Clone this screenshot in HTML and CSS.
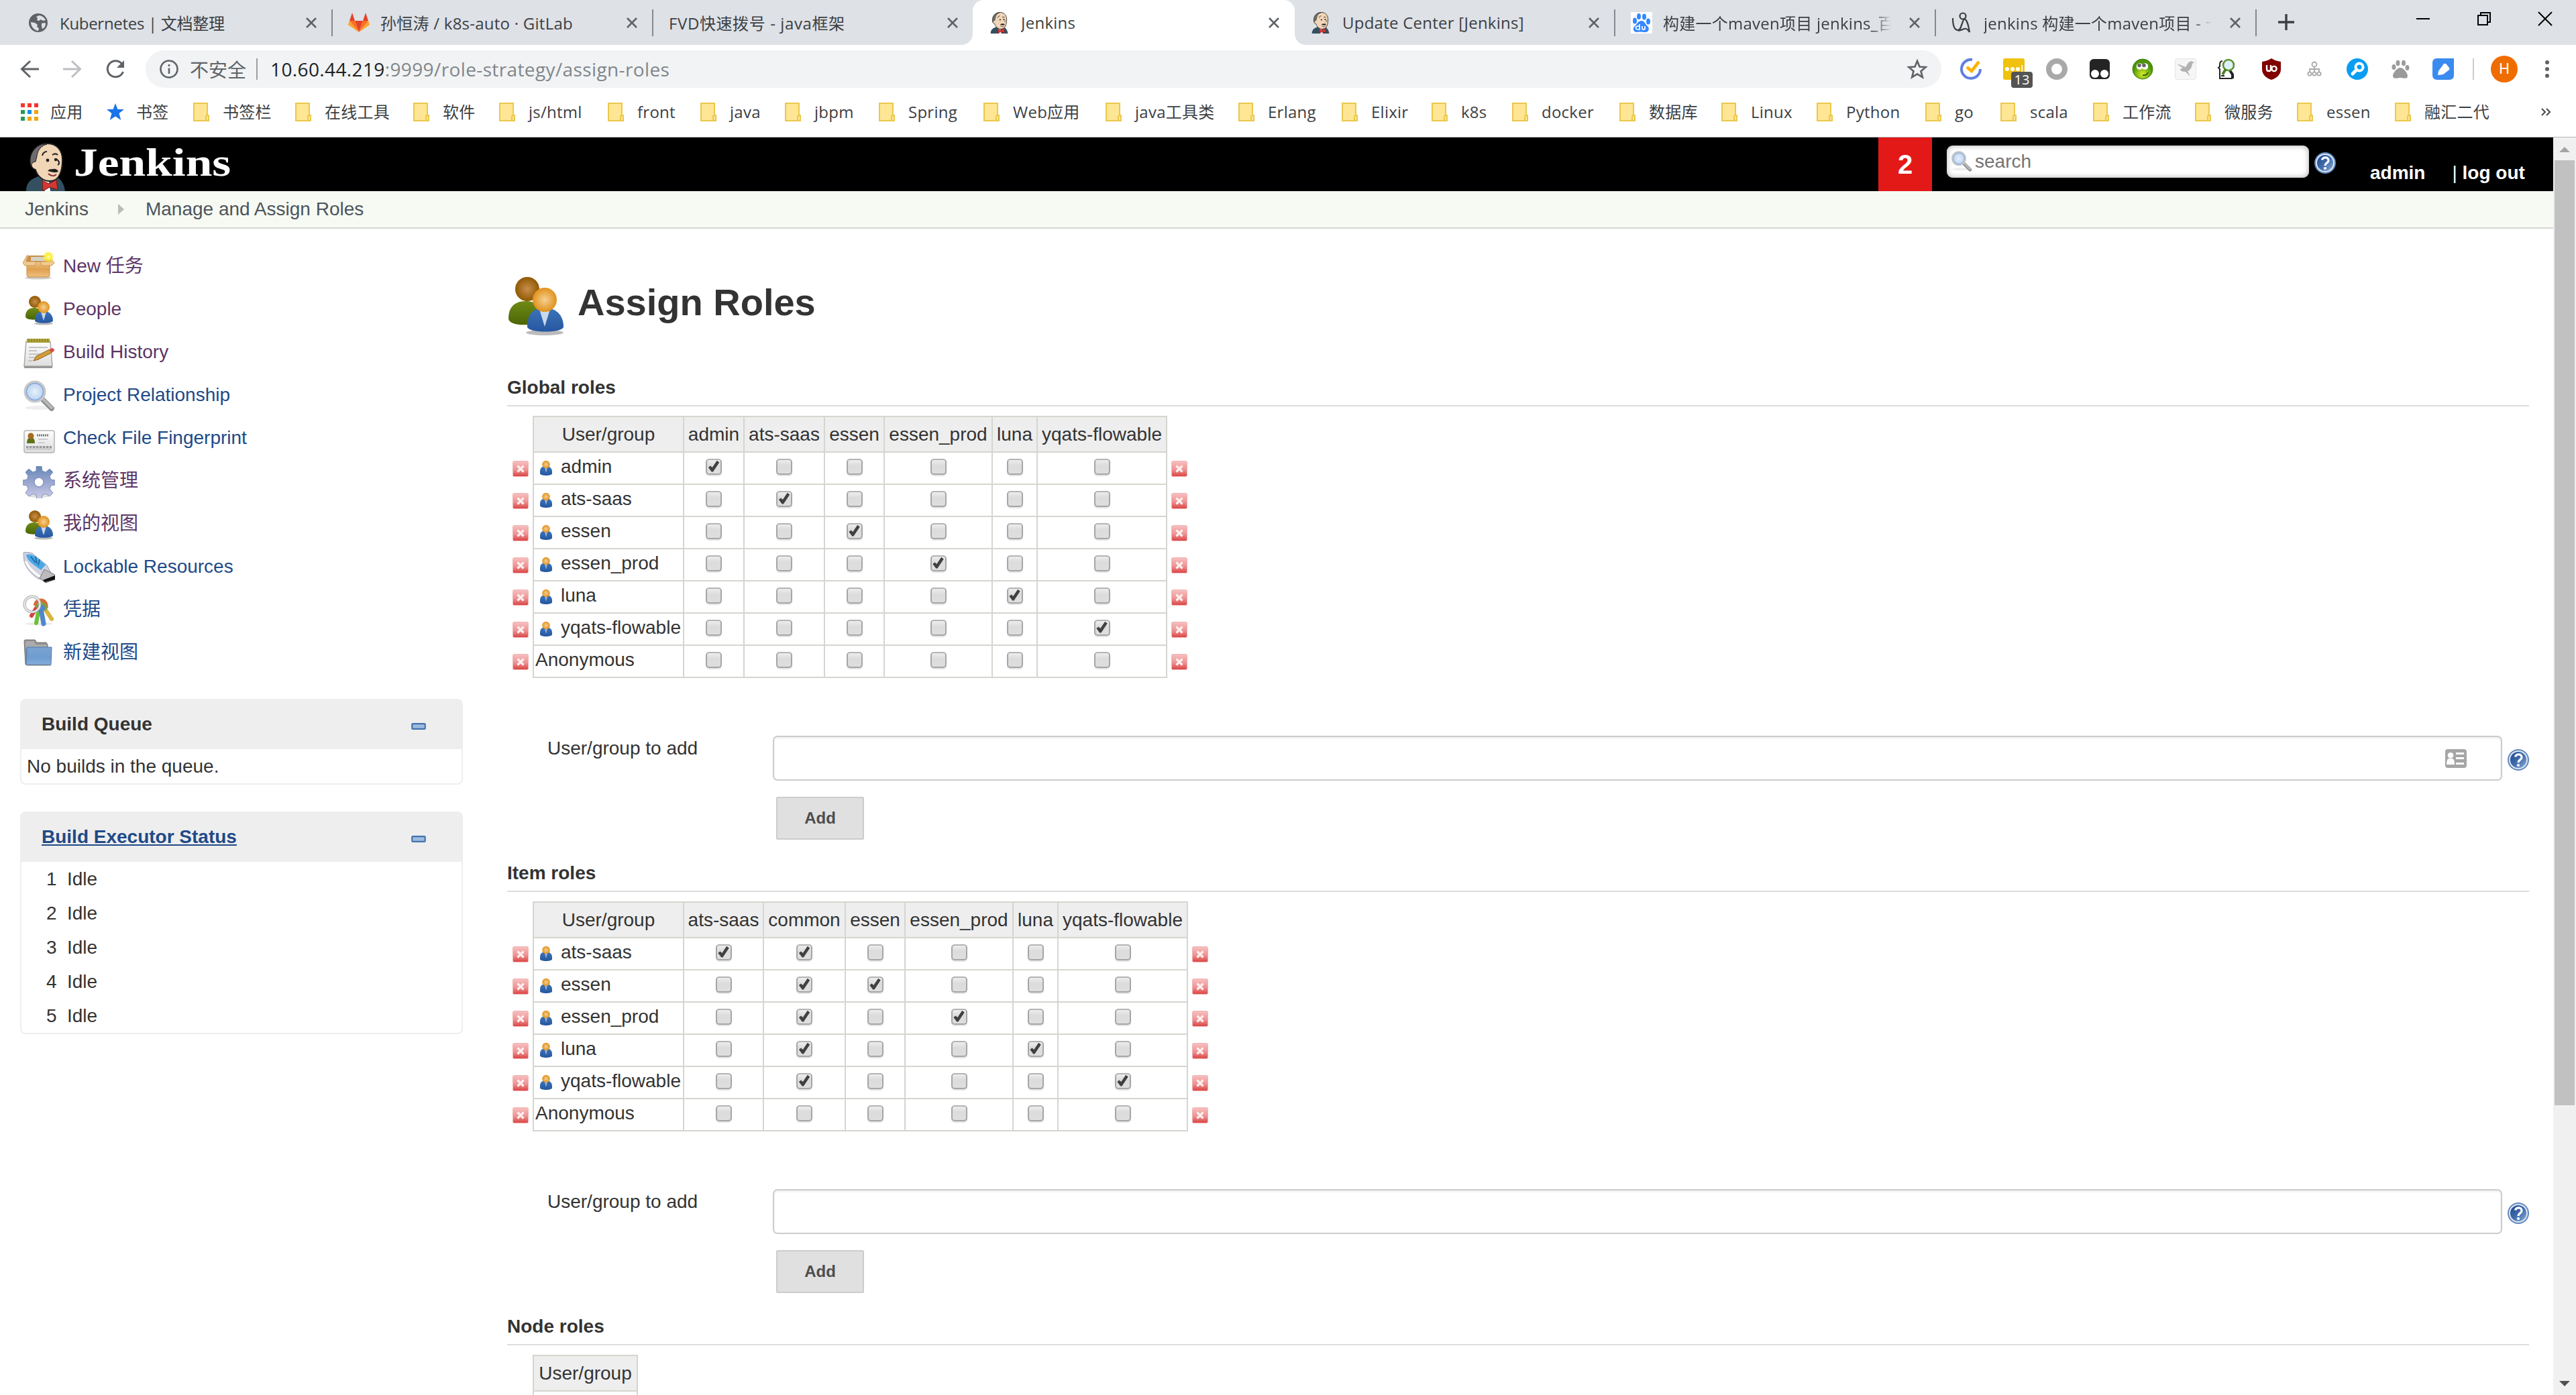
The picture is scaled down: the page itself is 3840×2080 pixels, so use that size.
FILE: index.html
```html
<!DOCTYPE html>
<html lang="zh-CN">
<head>
<meta charset="utf-8">
<title>Jenkins</title>
<link rel="stylesheet" href="styles.css">
</head>
<body>
<svg class="sprite" aria-hidden="true">
  <defs>
    <linearGradient id="g-box" x1="0" y1="0" x2="0" y2="1"><stop offset="0" stop-color="#f0c88a"/><stop offset=".5" stop-color="#e0a050"/><stop offset="1" stop-color="#f0c080"/></linearGradient>
    <radialGradient id="g-sun"><stop offset="0" stop-color="#fffbb0"/><stop offset=".5" stop-color="#fbee35"/><stop offset="1" stop-color="#fbee35" stop-opacity="0"/></radialGradient>
    <radialGradient id="g-brown"><stop offset="0" stop-color="#c98e4b"/><stop offset="1" stop-color="#8f5902"/></radialGradient>
    <radialGradient id="g-orange"><stop offset="0" stop-color="#f6cf94"/><stop offset="1" stop-color="#e0921b"/></radialGradient>
    <linearGradient id="g-green" x1="0" y1="0" x2="0" y2="1"><stop offset="0" stop-color="#6f8a16"/><stop offset="1" stop-color="#4b6606"/></linearGradient>
    <linearGradient id="g-blue" x1="0" y1="0" x2="0" y2="1"><stop offset="0" stop-color="#3d74b8"/><stop offset="1" stop-color="#2557a0"/></linearGradient>
    <linearGradient id="g-paper" x1="0" y1="0" x2="0" y2="1"><stop offset="0" stop-color="#fdfdfd"/><stop offset="1" stop-color="#dedede"/></linearGradient>
    <linearGradient id="g-gear" x1="0" y1="0" x2="0" y2="1"><stop offset="0" stop-color="#6485b5"/><stop offset="1" stop-color="#cfcbea"/></linearGradient>
    <linearGradient id="g-folder" x1="0" y1="0" x2="0" y2="1"><stop offset="0" stop-color="#7ba3d2"/><stop offset=".6" stop-color="#6f9ccf"/><stop offset="1" stop-color="#85aedd"/></linearGradient>
    <linearGradient id="g-help" x1="0" y1="0" x2="1" y2="1"><stop offset="0" stop-color="#1c4587"/><stop offset=".5" stop-color="#3f6bab"/><stop offset="1" stop-color="#8fb0da"/></linearGradient>
    <linearGradient id="g-red" x1="0" y1="0" x2="0" y2="1"><stop offset="0" stop-color="#f8c0c0"/><stop offset=".55" stop-color="#ee9393"/><stop offset="1" stop-color="#db4242"/></linearGradient>
    <radialGradient id="g-lens"><stop offset="0" stop-color="#e6f0fb"/><stop offset="1" stop-color="#b7d0ee"/></radialGradient>
    <radialGradient id="g-smile" cy=".75"><stop offset="0" stop-color="#d6ee2a"/><stop offset="1" stop-color="#4c9308"/></radialGradient>
  </defs>

  <symbol id="i-globe" viewBox="0 0 32 32"><circle cx="16" cy="16" r="14" fill="#5f6368"/><path d="M17 5c4 0 8 3 10 7l-4 1-3-2-3 2-3-1 1-3-2-2zM5 15l6 1 4 3-1 3 3 2-1 4c-6-1-11-6-11-13zM21 17l4-1 2 1c0 4-2 7-5 8l-1-4z" fill="#dee1e6"/></symbol>
  <symbol id="i-gitlab" viewBox="0 0 32 32"><path d="M16 30L10 13h12z" fill="#e24329"/><path d="M16 30L10 13H2zM16 30l6-17h8z" fill="#fc6d26"/><path d="M2 13l-2 6 16 11zM30 13l2 6-16 11z" fill="#fca326"/><path d="M2 13L6 1l4 12zM30 13L26 1l-4 12z" fill="#e24329"/></symbol>
  <symbol id="i-jenkins" viewBox="0 0 64 72"><path d="M2 72c0-14 8-18 18-22h24c8 2 14 8 16 22z" fill="#335061"/><path d="M27 54l9 4 2 14h-8z" fill="#fff"/><path d="M9 30C7 12 19 1 34 1c14 0 22 11 22 24 0 8-1 16-4 22-3 7-9 10-15 10-10 0-18-7-21-17-5-1-7-6-7-10z" fill="#f0d6b7" stroke="#231f20" stroke-width="1.8"/><path d="M9 34C4 16 18 0 33 2 25 4 19 10 18 20l-2 8-4 1z" fill="#6d6b6d" stroke="#231f20"/><path d="M26 19c1-4 4-6 7-6M41 18c3-2 6-2 8 0M47 24c4 3 6 7 2 9" fill="none" stroke="#231f20" stroke-width="2"/><circle cx="34" cy="26" r="2.4" fill="#231f20"/><circle cx="46" cy="25" r="2.2" fill="#231f20"/><path d="M34 42c3-4 6-2 8-3 4-1 7 1 8 4-4 2-8 1-16-1z" fill="#231f20"/><path d="M35 46c4 4 9 4 12 1" fill="none" stroke="#8b2b2b" stroke-width="2"/><path d="M26 56l10 5 11-6 2 15-12-4-10 6z" fill="#d33833" stroke="#7a1612"/></symbol>
  <symbol id="i-baidu" viewBox="0 0 32 32"><path d="M0 0h32v32H0z" fill="#fff"/><g fill="#3388ff"><ellipse cx="6" cy="13" rx="3" ry="4.5"/><ellipse cx="12" cy="6.500" rx="3" ry="4.500"/><ellipse cx="20" cy="7" rx="3" ry="4.500"/><ellipse cx="26" cy="14" rx="3" ry="4.500"/><path d="M16 13c5 0 5 5 9 8 4 4 1 9-3 9-3 0-9-1-13 0-5 0-7-6-3-9 4-4 5-8 10-8z"/></g><path d="M13 18v8h-3a2 2 0 0 1 0-5h3M17 21v3a2 2 0 0 0 4 0v-3 5" fill="none" stroke="#fff" stroke-width="1.700"/></symbol>
  <symbol id="i-bird" viewBox="0 0 32 32"><g fill="none" stroke="#3c3c3c" stroke-width="2.200"><circle cx="17" cy="6" r="4.500"/><path d="M2 9c0 12 3 18 8 18 5-1 4-9 9-17 4 1 6 8 8 20-3-5-5-6-8-5-5 2-8 4-11 1"/></g></symbol>
  <symbol id="i-close" viewBox="0 0 16 16"><path d="M1 1l14 14M15 1L1 15" stroke="#5f6368" stroke-width="2.600"/></symbol>

  <symbol id="i-folder-y" viewBox="0 0 24 28"><path d="M1 1h20v18h2v8H1z" fill="#ffe694" stroke="#ebc84b" stroke-width="2"/><path d="M19 27v-6q0-2 2-2t2 2v6z" fill="#ffe694" stroke="#ebc84b" stroke-width="2"/></symbol>

  <symbol id="i-people" viewBox="0 0 48 48"><ellipse cx="31" cy="43.500" rx="14" ry="2" fill="#bbb"/><path d="M4 33c0-9 5-13 13-13s12 5 12 14c-5 5-25 5-25-1z" fill="url(#g-green)"/><circle cx="18" cy="11" r="9" fill="url(#g-brown)"/><path d="M18 39c0-9 4-14 13-14s14 6 14 14c0 5-27 5-27 0z" fill="url(#g-blue)"/><path d="M27 26h8l-4 13z" fill="#c9d8ec"/><circle cx="31" cy="19" r="9" fill="url(#g-orange)"/></symbol>
  <symbol id="i-user" viewBox="0 0 20 24"><path d="M1 17c0-6 4-8 9-8s9 3 9 8v3c0 4-18 4-18 0z" fill="url(#g-blue)"/><path d="M8 11h4l-2 8z" fill="#9db9de"/><circle cx="10" cy="6.500" r="5.800" fill="url(#g-orange)"/></symbol>
  <symbol id="i-newbox" viewBox="0 0 48 48"><ellipse cx="23" cy="39.500" rx="20" ry="2" fill="#ccc"/><path d="M8 6h30l3 9H5z" fill="#c98f45"/><path d="M12 8h22v6H12z" fill="#d7d3c4"/><path d="M6 15h34v20q0 3-3 3H9q-3 0-3-3z" fill="url(#g-box)" stroke="#c58b3e"/><path d="M7 5L0 17l3 4h15l2-6h6l2 6h15l4-4-8-11 3 9H5z" fill="#f1ca91" stroke="#c99858"/><circle cx="38" cy="8" r="9" fill="url(#g-sun)"/></symbol>
  <symbol id="i-notepad" viewBox="0 0 48 48"><path d="M5 6h36l3 37H2z" fill="url(#g-paper)" stroke="#a9a9a0" stroke-width="1.500"/><path d="M2 43h42v3H2z" fill="#999"/><path d="M6 2h34v6H6z" fill="#b0a43a"/><path d="M9 2v5M13 2v5M17 2v5M21 2v5M25 2v5M29 2v5M33 2v5M37 2v5" stroke="#7d7420"/><path d="M9 15h28M9 20h12M9 25h16M9 30h9M8 35h7" stroke="#c5c5c5" stroke-width="2"/><path d="M16 35l4-7 20-10 3 5-20 10z" fill="#d19b3b" stroke="#8f6316"/><path d="M40 18l3-2q4 0 4 4l-4 3z" fill="#e04848"/></symbol>
  <symbol id="i-search" viewBox="0 0 48 48"><ellipse cx="24" cy="41" rx="21" ry="3" fill="#eee"/><path d="M29 28l14 14" stroke="#8c8c8c" stroke-width="7.500" stroke-linecap="round"/><path d="M31 29l12 12" stroke="#b9b9b9" stroke-width="4" stroke-linecap="round"/><circle cx="18" cy="17" r="14.500" fill="url(#g-lens)" stroke="#c9c9c9" stroke-width="4"/><circle cx="18" cy="17" r="12.500" fill="none" stroke="#7fa7dc" stroke-width="1.500"/></symbol>
  <symbol id="i-card" viewBox="0 0 48 48"><rect x="2" y="11" width="45" height="33" rx="3" fill="url(#g-paper)" stroke="#b5b5b5" stroke-width="1.500"/><path d="M6 30q0-9 6-9t6 9z" fill="#5d7416"/><circle cx="12" cy="19" r="4.500" fill="#a76a20"/><path d="M21 18h17" stroke="#777" stroke-width="3" stroke-dasharray="2 1"/><path d="M23 24h14M23 29h10" stroke="#ccc" stroke-width="2"/><path d="M5 34h38v6H5z" fill="#ccc"/><path d="M5 35.500h38" stroke="#999" stroke-width="3" stroke-dasharray="3 2"/></symbol>
  <symbol id="i-gear" viewBox="0 0 48 48"><ellipse cx="24" cy="44" rx="17" ry="3" fill="#ddd"/><path d="M20 0h8l1 7 5 2 6-5 5 5-5 6 2 5 6 1v7l-6 1-2 5 5 6-5 5-6-4-5 2-1 6h-7l-1-6-5-2-6 4-5-5 4-6-2-5-6-1v-7l6-1 2-5-4-6 5-5 6 5 5-2z" fill="url(#g-gear)" stroke="#8193b8"/><circle cx="24" cy="24" r="7" fill="#fff" stroke="#8a94c0" stroke-width="1.500"/></symbol>
  <symbol id="i-usb" viewBox="0 0 48 48"><path d="M1 1q6-2 13 1l22 18 6 11-6 10-13-1Q7 30 2 14z" fill="#d2d3e1" stroke="#9b9cae"/><path d="M4 14q8 16 26 25" stroke="#fff" stroke-width="3" fill="none"/><path d="M5 4q8-2 14 3l15 12-7 8-11-8Q6 12 5 4z" fill="#48a9e6"/><path d="M12 7l7 9m0-9l2 10m4-6l-2 9" stroke="#1b5d9d" stroke-width="1.500"/><path d="M32 26l16 8v7l-14 5-9-7z" fill="#bbb" stroke="#777"/><path d="M30 42l18-7v6l-15 4z" fill="#111"/></symbol>
  <symbol id="i-keys" viewBox="0 0 48 48"><ellipse cx="24" cy="43" rx="20" ry="2.500" fill="#ececec"/><path d="M21 18l-8 13" stroke="#d8403c" stroke-width="6" stroke-linecap="round"/><path d="M24 20l-4 22" stroke="#6cc235" stroke-width="6" stroke-linecap="round"/><path d="M31 18l12 18" stroke="#d6b540" stroke-width="6" stroke-linecap="round"/><path d="M18 16q2-9 10-8 8 2 7 12" fill="none" stroke="#da6a34" stroke-width="5"/><path d="M20 19q4-8 10-6 6 3 3 10" fill="none" stroke="#78a63b" stroke-width="4"/><path d="M27 21l4 22" stroke="#5187ca" stroke-width="7" stroke-linecap="round"/><circle cx="27" cy="20" r="6" fill="#5187ca"/><circle cx="14" cy="14" r="11.500" fill="none" stroke="#aaa" stroke-width="4"/><circle cx="14" cy="14" r="11.500" fill="none" stroke="#eee" stroke-width="2"/></symbol>
  <symbol id="i-folder-b" viewBox="0 0 48 48"><path d="M2 5q0-2 2-2h14l3 4h14l2 3v30H4z" fill="#8f8f8f" stroke="#777"/><path d="M4 5h13l2 5h17v6H4z" fill="#ababab"/><path d="M6 14h37l-1 26H5z" fill="url(#g-folder)" stroke="#4d7ab0"/><path d="M6 41h36" stroke="#777"/></symbol>

  <symbol id="i-help" viewBox="0 0 32 32"><circle cx="16" cy="16" r="16" fill="#6288bd"/><circle cx="16" cy="16" r="13" fill="url(#g-help)" stroke="#dbe6f4" stroke-width="2"/><path d="M11.500 11.500c1-5 10-5 9.500 1-.5 4-5 3.500-5 7.500" fill="none" stroke="#fff" stroke-width="3.300"/><circle cx="16" cy="24" r="2.100" fill="#fff"/></symbol>
  <symbol id="i-del" viewBox="0 0 24 24"><rect x=".5" y=".5" width="23" height="23" rx="2" fill="url(#g-red)" stroke="#efb4b4"/><path d="M7.500 7.500l9 9m0-9l-9 9" stroke="#fdeeee" stroke-width="3.200"/></symbol>
  <symbol id="i-minus" viewBox="0 0 26 12"><rect x="1.300" y="1.300" width="23.400" height="9.400" rx="1.500" fill="#9dbbe0" stroke="#4372ae" stroke-width="2.600"/></symbol>
  <symbol id="i-contact" viewBox="0 0 32 28"><rect width="32" height="28" rx="4" fill="#a6a6a6"/><g fill="#fff"><circle cx="8" cy="9.300" r="4.300"/><path d="M2 23q0-9 4-9h4q4 0 4 9zM16 5h12v3H16zM16 12h12v3H16zM16 20h12v3H16z"/></g></symbol>
</svg>

<header class="chrome">
  <div class="tabs">
    <div class="tab"><svg class="fav"><use href="#i-globe"/></svg><span class="tab-t snug">Kubernetes | 文档整理</span><svg class="x"><use href="#i-close"/></svg></div>
    <div class="tab"><svg class="fav"><use href="#i-gitlab"/></svg><span class="tab-t">孙恒涛 / k8s-auto · GitLab</span><svg class="x"><use href="#i-close"/></svg></div>
    <div class="tab last-before"><span class="tab-t wide">FVD快速拨号 - java框架</span><svg class="x"><use href="#i-close"/></svg></div>
    <div class="tab active"><svg class="fav"><use href="#i-jenkins"/></svg><span class="tab-t">Jenkins</span><svg class="x"><use href="#i-close"/></svg></div>
    <div class="tab"><svg class="fav"><use href="#i-jenkins"/></svg><span class="tab-t">Update Center [Jenkins]</span><svg class="x"><use href="#i-close"/></svg></div>
    <div class="tab"><svg class="fav"><use href="#i-baidu"/></svg><span class="tab-t fade">构建一个maven项目 jenkins_百度</span><svg class="x"><use href="#i-close"/></svg></div>
    <div class="tab"><svg class="fav"><use href="#i-bird"/></svg><span class="tab-t fade">jenkins 构建一个maven项目 - 卡饭</span><svg class="x"><use href="#i-close"/></svg></div>
    <svg class="plus" viewBox="0 0 24 24"><path d="M12 0v24M0 12h24" stroke="#3c4043" stroke-width="3.400"/></svg>
    <div class="win">
      <svg viewBox="0 0 20 20"><path d="M0 10h20" stroke="#000" stroke-width="2"/></svg>
      <svg viewBox="0 0 20 20"><path d="M1 5h14v14H1zM5 5V1h14v14h-4" fill="none" stroke="#000" stroke-width="2"/></svg>
      <svg viewBox="0 0 20 20"><path d="M0 0l20 20M20 0L0 20" stroke="#000" stroke-width="2"/></svg>
    </div>
  </div>

  <div class="toolbar">
    <div class="nav">
      <svg viewBox="0 0 28 28"><path d="M28 14H3M15 2L2.500 14 15 26" fill="none" stroke="#5f6368" stroke-width="3"/></svg>
      <svg viewBox="0 0 28 28"><path d="M0 14h25M13 2l12.500 12L13 26" fill="none" stroke="#bcbec1" stroke-width="3"/></svg>
      <svg viewBox="0 0 28 28"><path d="M23.500 6A12 12 0 1 0 25.500 18" fill="none" stroke="#5f6368" stroke-width="3"/><path d="M27 1v11H16z" fill="#5f6368"/></svg>
    </div>
    <div class="omni">
      <svg class="info" viewBox="0 0 28 28"><circle cx="14" cy="14" r="12.500" fill="none" stroke="#5f6368" stroke-width="2.600"/><path d="M14 12.500V21M14 7v3" stroke="#5f6368" stroke-width="2.600"/></svg>
      <span class="insecure">不安全</span>
      <span class="url"><b>10.60.44.219</b>:9999/role-strategy/assign-roles</span>
      <svg class="star" viewBox="0 0 32 32"><path d="M16 4l3.500 8.500 9 .7-7 6 2.300 9L16 23.400l-7.800 4.800 2.300-9-7-6 9-.7z" fill="none" stroke="#5f6368" stroke-width="2.700"/></svg>
    </div>
    <div class="exts">
      <svg viewBox="0 0 32 32"><path d="M18 2A14 14 0 1 0 30 16" fill="none" stroke="#617fe0" stroke-width="4"/><path d="M10 13l7 6L28 5" fill="none" stroke="#ffb000" stroke-width="4.500"/></svg>
      <div class="badged"><svg viewBox="0 0 32 32"><rect width="32" height="32" rx="3" fill="#f0c20f"/><g fill="#fff"><circle cx="6" cy="16" r="3"/><circle cx="14" cy="16" r="3"/><circle cx="22" cy="16" r="3"/><path d="M27.500 10h1.500v10h-1.500z"/></g></svg><span class="badge">13</span></div>
      <svg viewBox="0 0 32 32"><circle cx="16" cy="16" r="12" fill="#fff" stroke="#a9a9a9" stroke-width="8"/></svg>
      <svg viewBox="0 0 32 32"><rect x="1" y="1" width="30" height="30" rx="6" fill="#242424"/><circle cx="9" cy="23" r="6" fill="#fff"/><circle cx="23" cy="23" r="6" fill="#fff"/></svg>
      <svg viewBox="0 0 32 32"><circle cx="16" cy="16" r="15" fill="url(#g-smile)" stroke="#3c7a0c"/><circle cx="11.500" cy="12" r="4.800" fill="#fff"/><circle cx="19.500" cy="12" r="4.800" fill="#fff"/><circle cx="11" cy="10.500" r="2.800" fill="#666"/><circle cx="18" cy="10.500" r="2.800" fill="#666"/><path d="M16 25q6 1 8-4" fill="none" stroke="#1f4a05" stroke-width="1.600"/></svg>
      <svg viewBox="0 0 32 32"><rect x=".5" y=".5" width="31" height="31" rx="3" fill="#f6f6f6" stroke="#e6e6e6"/><path d="M3 8l13 5q4-8 8-9l5 2-3 2q-1 9-7 11l4 8-7-7q-8 0-8-4l4-2q-5-2-9-6z" fill="#b2b2b2"/></svg>
      <svg viewBox="0 0 32 32"><path d="M7 4q-4 0-4 5v3L1 14l2 2v14h19M10 26H5" fill="none" stroke="#222" stroke-width="2"/><path d="M22 30v-6l-4-6" fill="none" stroke="#222" stroke-width="4"/><circle cx="16" cy="10" r="8" fill="#dff0fa" stroke="#5d9130" stroke-width="2.600"/><path d="M12 16l-5 8" stroke="#4b7d22" stroke-width="4"/></svg>
      <svg viewBox="0 0 32 32"><path d="M16 0q6 4 14 5v11q0 11-14 16Q2 27 2 16V5q8-1 14-5z" fill="#800000"/><path d="M9 10v6q0 3 3 3t3-3v-6" fill="none" stroke="#fff" stroke-width="2.400"/><circle cx="20" cy="15.500" r="3.600" fill="none" stroke="#fff" stroke-width="2.400"/></svg>
      <svg viewBox="0 0 32 32"><g fill="none" stroke="#a9a9a9" stroke-width="1.800"><circle cx="16" cy="9" r="3.500"/><circle cx="9" cy="23" r="2.600"/><circle cx="16" cy="23" r="2.600"/><circle cx="23" cy="23" r="2.600"/><path d="M16 12v8M9 20v-4h14v4"/></g></svg>
      <svg viewBox="0 0 32 32"><circle cx="16" cy="16" r="16" fill="#0a9df2"/><circle cx="19" cy="13" r="5.500" fill="none" stroke="#fff" stroke-width="4"/><path d="M15 17l-6 6" stroke="#fff" stroke-width="5" stroke-linecap="round"/></svg>
      <svg viewBox="0 0 32 32"><g fill="#9b9b9b"><ellipse cx="6.500" cy="13" rx="3" ry="4"/><ellipse cx="12.500" cy="7" rx="3" ry="4.300"/><ellipse cx="21" cy="7" rx="3" ry="4.300"/><ellipse cx="26.500" cy="14" rx="3" ry="4"/><path d="M16 14c5 0 11 8 11 12 0 6-6 3-11 3S5 32 5 26c0-4 6-12 11-12z"/></g></svg>
      <svg viewBox="0 0 32 32"><path d="M7 0h25v25q0 7-7 7H7q-7 0-7-7V7q0-7 7-7z" fill="#3a8bf0"/><path d="M9 19L17 8q2-1 4 1l4 5q1 2 0 3l-9 7-8 1z" fill="#fff"/></svg>
    </div>
    <i class="vsep"></i>
    <span class="avatar">H</span>
    <svg class="kebab" viewBox="0 0 6 26"><g fill="#5f6368"><circle cx="3" cy="3" r="3"/><circle cx="3" cy="13" r="3"/><circle cx="3" cy="23" r="3"/></g></svg>
  </div>

  <nav class="marks">
    <a><svg class="m26" viewBox="0 0 26 26"><path d="M0 0h6v6H0zM10 0h6v6h-6zM20 0h6v6h-6z" fill="#f5362e"/><path d="M0 10h6v6H0zM0 20h6v6H0z" fill="#279b54"/><path d="M10 10h6v6h-6z" fill="#1a8cf0"/><path d="M20 10h6v6h-6zM10 20h6v6h-6zM20 20h6v6h-6z" fill="#f2a60c"/></svg>应用</a>
    <a><svg class="m26" viewBox="0 0 26 26"><path d="M13 0l3.400 9H26l-7.500 6 2.800 10L13 19.500 4.700 25l2.800-10L0 9h9.600z" fill="#1a73e8"/></svg>书签</a>
    <a><svg><use href="#i-folder-y"/></svg>书签栏</a>
    <a><svg><use href="#i-folder-y"/></svg>在线工具</a>
    <a><svg><use href="#i-folder-y"/></svg>软件</a>
    <a><svg><use href="#i-folder-y"/></svg>js/html</a>
    <a><svg><use href="#i-folder-y"/></svg>front</a>
    <a><svg><use href="#i-folder-y"/></svg>java</a>
    <a><svg><use href="#i-folder-y"/></svg>jbpm</a>
    <a><svg><use href="#i-folder-y"/></svg>Spring</a>
    <a><svg><use href="#i-folder-y"/></svg>Web应用</a>
    <a><svg><use href="#i-folder-y"/></svg>java工具类</a>
    <a><svg><use href="#i-folder-y"/></svg>Erlang</a>
    <a><svg><use href="#i-folder-y"/></svg>Elixir</a>
    <a><svg><use href="#i-folder-y"/></svg>k8s</a>
    <a><svg><use href="#i-folder-y"/></svg>docker</a>
    <a><svg><use href="#i-folder-y"/></svg>数据库</a>
    <a><svg><use href="#i-folder-y"/></svg>Linux</a>
    <a><svg><use href="#i-folder-y"/></svg>Python</a>
    <a><svg><use href="#i-folder-y"/></svg>go</a>
    <a><svg><use href="#i-folder-y"/></svg>scala</a>
    <a><svg><use href="#i-folder-y"/></svg>工作流</a>
    <a><svg><use href="#i-folder-y"/></svg>微服务</a>
    <a><svg><use href="#i-folder-y"/></svg>essen</a>
    <a><svg><use href="#i-folder-y"/></svg>融汇二代</a>
    <svg class="more" viewBox="0 0 14 12"><path d="M1 1l5 5-5 5M8 1l5 5-5 5" fill="none" stroke="#4d5156" stroke-width="2.200"/></svg>
  </nav>
</header>

<div class="view">
  <div class="page">
    <div class="top">
      <svg class="mascot"><use href="#i-jenkins"/></svg>
      <span class="brand">Jenkins</span>
      <span class="alerts">2</span>
      <div class="searchbox"><svg><use href="#i-search"/></svg>search</div>
      <svg class="help"><use href="#i-help"/></svg>
      <b class="who">admin</b>
      <span class="out">| <b>log out</b></span>
    </div>
    <div class="crumbs"><span>Jenkins</span><i></i><span>Manage and Assign Roles</span></div>

    <div class="cols">
      <aside>
        <ul class="tasks">
          <li class="seen"><svg><use href="#i-newbox"/></svg>New 任务</li>
          <li class="seen"><svg><use href="#i-people"/></svg>People</li>
          <li class="seen"><svg><use href="#i-notepad"/></svg>Build History</li>
          <li><svg><use href="#i-search"/></svg>Project Relationship</li>
          <li><svg><use href="#i-card"/></svg>Check File Fingerprint</li>
          <li class="seen"><svg><use href="#i-gear"/></svg>系统管理</li>
          <li class="seen"><svg><use href="#i-people"/></svg>我的视图</li>
          <li><svg><use href="#i-usb"/></svg>Lockable Resources</li>
          <li><svg><use href="#i-keys"/></svg>凭据</li>
          <li><svg><use href="#i-folder-b"/></svg>新建视图</li>
        </ul>
        <section class="pane">
          <h3><span>Build Queue</span><svg><use href="#i-minus"/></svg></h3>
          <p>No builds in the queue.</p>
        </section>
        <section class="pane">
          <h3><a>Build Executor Status</a><svg><use href="#i-minus"/></svg></h3>
          <ol><li><i>1</i>Idle</li><li><i>2</i>Idle</li><li><i>3</i>Idle</li><li><i>4</i>Idle</li><li><i>5</i>Idle</li></ol>
        </section>
      </aside>

      <main>
        <h1><svg><use href="#i-people"/></svg>Assign Roles</h1>

        <h2>Global roles</h2>
        <table class="roles global">
          <colgroup><col class="c-edge"><col class="c-user"><col class="c1"><col class="c2"><col class="c3"><col class="c4"><col class="c5"><col class="c6"><col class="c-edge2"></colgroup>
          <tr><td class="e"></td><th>User/group</th><th>admin</th><th>ats-saas</th><th>essen</th><th>essen_prod</th><th>luna</th><th>yqats-flowable</th><td class="e"></td></tr>
          <tr><td class="e"><svg><use href="#i-del"/></svg></td><td class="u"><svg><use href="#i-user"/></svg>admin</td><td><input type="checkbox" checked></td><td><input type="checkbox"></td><td><input type="checkbox"></td><td><input type="checkbox"></td><td><input type="checkbox"></td><td><input type="checkbox"></td><td class="e r"><svg><use href="#i-del"/></svg></td></tr>
          <tr><td class="e"><svg><use href="#i-del"/></svg></td><td class="u"><svg><use href="#i-user"/></svg>ats-saas</td><td><input type="checkbox"></td><td><input type="checkbox" checked></td><td><input type="checkbox"></td><td><input type="checkbox"></td><td><input type="checkbox"></td><td><input type="checkbox"></td><td class="e r"><svg><use href="#i-del"/></svg></td></tr>
          <tr><td class="e"><svg><use href="#i-del"/></svg></td><td class="u"><svg><use href="#i-user"/></svg>essen</td><td><input type="checkbox"></td><td><input type="checkbox"></td><td><input type="checkbox" checked></td><td><input type="checkbox"></td><td><input type="checkbox"></td><td><input type="checkbox"></td><td class="e r"><svg><use href="#i-del"/></svg></td></tr>
          <tr><td class="e"><svg><use href="#i-del"/></svg></td><td class="u"><svg><use href="#i-user"/></svg>essen_prod</td><td><input type="checkbox"></td><td><input type="checkbox"></td><td><input type="checkbox"></td><td><input type="checkbox" checked></td><td><input type="checkbox"></td><td><input type="checkbox"></td><td class="e r"><svg><use href="#i-del"/></svg></td></tr>
          <tr><td class="e"><svg><use href="#i-del"/></svg></td><td class="u"><svg><use href="#i-user"/></svg>luna</td><td><input type="checkbox"></td><td><input type="checkbox"></td><td><input type="checkbox"></td><td><input type="checkbox"></td><td><input type="checkbox" checked></td><td><input type="checkbox"></td><td class="e r"><svg><use href="#i-del"/></svg></td></tr>
          <tr><td class="e"><svg><use href="#i-del"/></svg></td><td class="u"><svg><use href="#i-user"/></svg>yqats-flowable</td><td><input type="checkbox"></td><td><input type="checkbox"></td><td><input type="checkbox"></td><td><input type="checkbox"></td><td><input type="checkbox"></td><td><input type="checkbox" checked></td><td class="e r"><svg><use href="#i-del"/></svg></td></tr>
          <tr><td class="e"><svg><use href="#i-del"/></svg></td><td class="u">Anonymous</td><td><input type="checkbox"></td><td><input type="checkbox"></td><td><input type="checkbox"></td><td><input type="checkbox"></td><td><input type="checkbox"></td><td><input type="checkbox"></td><td class="e r"><svg><use href="#i-del"/></svg></td></tr>
        </table>
        <div class="add">
          <label>User/group to add</label>
          <div class="field"><svg><use href="#i-contact"/></svg></div>
          <svg class="help"><use href="#i-help"/></svg>
          <button>Add</button>
        </div>

        <h2>Item roles</h2>
        <table class="roles item">
          <colgroup><col class="c-edge"><col class="c-user"><col class="c1"><col class="c2"><col class="c3"><col class="c4"><col class="c5"><col class="c6"><col class="c-edge2"></colgroup>
          <tr><td class="e"></td><th>User/group</th><th>ats-saas</th><th>common</th><th>essen</th><th>essen_prod</th><th>luna</th><th>yqats-flowable</th><td class="e"></td></tr>
          <tr><td class="e"><svg><use href="#i-del"/></svg></td><td class="u"><svg><use href="#i-user"/></svg>ats-saas</td><td><input type="checkbox" checked></td><td><input type="checkbox" checked></td><td><input type="checkbox"></td><td><input type="checkbox"></td><td><input type="checkbox"></td><td><input type="checkbox"></td><td class="e r"><svg><use href="#i-del"/></svg></td></tr>
          <tr><td class="e"><svg><use href="#i-del"/></svg></td><td class="u"><svg><use href="#i-user"/></svg>essen</td><td><input type="checkbox"></td><td><input type="checkbox" checked></td><td><input type="checkbox" checked></td><td><input type="checkbox"></td><td><input type="checkbox"></td><td><input type="checkbox"></td><td class="e r"><svg><use href="#i-del"/></svg></td></tr>
          <tr><td class="e"><svg><use href="#i-del"/></svg></td><td class="u"><svg><use href="#i-user"/></svg>essen_prod</td><td><input type="checkbox"></td><td><input type="checkbox" checked></td><td><input type="checkbox"></td><td><input type="checkbox" checked></td><td><input type="checkbox"></td><td><input type="checkbox"></td><td class="e r"><svg><use href="#i-del"/></svg></td></tr>
          <tr><td class="e"><svg><use href="#i-del"/></svg></td><td class="u"><svg><use href="#i-user"/></svg>luna</td><td><input type="checkbox"></td><td><input type="checkbox" checked></td><td><input type="checkbox"></td><td><input type="checkbox"></td><td><input type="checkbox" checked></td><td><input type="checkbox"></td><td class="e r"><svg><use href="#i-del"/></svg></td></tr>
          <tr><td class="e"><svg><use href="#i-del"/></svg></td><td class="u"><svg><use href="#i-user"/></svg>yqats-flowable</td><td><input type="checkbox"></td><td><input type="checkbox" checked></td><td><input type="checkbox"></td><td><input type="checkbox"></td><td><input type="checkbox"></td><td><input type="checkbox" checked></td><td class="e r"><svg><use href="#i-del"/></svg></td></tr>
          <tr><td class="e"><svg><use href="#i-del"/></svg></td><td class="u">Anonymous</td><td><input type="checkbox"></td><td><input type="checkbox"></td><td><input type="checkbox"></td><td><input type="checkbox"></td><td><input type="checkbox"></td><td><input type="checkbox"></td><td class="e r"><svg><use href="#i-del"/></svg></td></tr>
        </table>
        <div class="add">
          <label>User/group to add</label>
          <div class="field"></div>
          <svg class="help"><use href="#i-help"/></svg>
          <button>Add</button>
        </div>

        <h2>Node roles</h2>
        <table class="roles node">
          <colgroup><col class="c-edge"><col class="c-user"></colgroup>
          <tr><td class="e"></td><th>User/group</th></tr>
          <tr><td class="e"></td><td></td></tr>
        </table>
      </main>
    </div>
  </div>
  <div class="scroll"><i class="up"></i><i class="thumb"></i><i class="down"></i></div>
</div>
</body>
</html>
```
FILE: styles.css
```css
* { box-sizing: border-box; margin: 0; padding: 0; }
html, body { width: 3840px; height: 2080px; overflow: hidden; background: #fff; }
body { display: flex; flex-direction: column; font-family: "Liberation Sans", "Noto Sans CJK SC", sans-serif; font-size: 28px; color: #333; }
i { font-style: normal; }
svg { display: block; flex: none; overflow: visible; }
.sprite { position: absolute; width: 0; height: 0; }

/* browser frame */
.chrome { flex: none; height: 205px; border-bottom: 1px solid #b6b4b6; font-family: "Open Sans", "Noto Sans CJK SC", sans-serif; }
.tabs { display: flex; height: 67px; padding-left: 17px; background: #dee1e6; }
.tab { position: relative; display: flex; align-items: center; width: 478px; height: 67px; padding: 0 23px 0 24px; font-size: 24px; letter-spacing: 0.25px; color: #3c4043; }
.tab::after { content: ""; position: absolute; right: -1px; top: 14px; width: 2px; height: 40px; background: #85888c; }
.fav { width: 32px; height: 32px; margin-right: 16px; }
.tab-t { width: 340px; overflow: hidden; white-space: nowrap; }
.snug { letter-spacing: -0.3px; }
.wide { letter-spacing: 0.6px; }
.fade { -webkit-mask-image: linear-gradient(90deg, #000 92%, transparent 100%); mask-image: linear-gradient(90deg, #000 92%, transparent 100%); }
.x { width: 16px; height: 16px; margin-left: auto; }
.tab.last-before::after { display: none; }
.tab.active { width: 480px; margin: 0 -1px; background: #fff; border-radius: 16px 16px 0 0; }
.tab.active::before, .tab.active::after { content: ""; position: absolute; top: auto; bottom: 0; width: 16px; height: 16px; }
.tab.active::before { left: -16px; background: radial-gradient(circle at 0 0, #dee1e6 15.5px, #fff 16px); }
.tab.active::after { right: -16px; background: radial-gradient(circle at 100% 0, #dee1e6 15.5px, #fff 16px); }
.plus { width: 24px; height: 24px; margin: 21px 0 0 33px; }
.win { display: flex; gap: 71px; margin: 18px 36px 0 auto; }
.win svg { width: 20px; height: 20px; }

.toolbar { display: flex; align-items: center; height: 72px; }
.nav { display: flex; gap: 36px; padding-left: 30px; width: 217px; }
.nav svg { width: 28px; height: 28px; }
.omni { display: flex; align-items: center; width: 2677px; height: 56px; padding: 0 20px 0 21px; border-radius: 28px; background: #f1f3f4; font-size: 28px; }
.info { width: 28px; height: 28px; margin-right: 17px; }
.insecure { width: 99px; color: #5f6368; }
.url { padding-left: 19px; border-left: 2px solid #9aa0a6; line-height: 32px; letter-spacing: 0.38px; color: #80868b; }
.url b { font-weight: 400; color: #202124; }
.star { width: 32px; height: 32px; margin-left: auto; }
.exts { display: flex; gap: 32px; margin-left: 28px; }
.exts svg { width: 32px; height: 32px; }
.badged { position: relative; }
.badge { position: absolute; left: 12px; top: 20px; width: 32px; height: 24px; border-radius: 4px; background: #545454; color: #fff; font-size: 20px; line-height: 24px; text-align: center; }
.vsep { width: 2px; height: 32px; margin: 0 25px 0 28px; background: #ccc; }
.avatar { width: 40px; height: 40px; border-radius: 50%; background: #ef6c00; color: #fff; font: 22px/40px Roboto, sans-serif; text-align: center; }
.kebab { width: 6px; height: 26px; margin-left: 41px; }

.marks { display: grid; grid-template-columns: 128px 129px 152px 176px 128px 162px 138px 126px 140px 156px 182px 198px 154px 134px 120px 160px 152px 142px 162px 112px 138px 152px 152px 146px 205px 14px; align-items: center; height: 56px; padding-left: 31px; font-size: 24px; line-height: 30px; letter-spacing: 0.25px; color: #3c4043; }
.marks a { display: flex; align-items: center; gap: 20px; white-space: nowrap; }
.marks svg { width: 24px; height: 28px; }
.marks .m26 { width: 26px; height: 26px; margin-right: -2px; }
.marks .more { width: 14px; height: 12px; margin-left: 13px; }

/* page */
.view { display: flex; flex: 1; min-height: 0; }
.page { width: 3806px; overflow: hidden; }
.top { display: flex; height: 80px; padding-left: 36px; background: #000; color: #fff; }
.mascot { width: 66px; height: 72px; margin-top: 8px; }
.brand { width: 2698px; padding-left: 8px; font: bold 60px/75px "Liberation Serif", serif; transform: scaleX(1.19); transform-origin: 8px 0; }
.alerts { width: 80px; background: #e31918; font-weight: bold; font-size: 40px; line-height: 80px; text-align: center; }
.searchbox { display: flex; align-items: center; width: 540px; height: 48px; margin: 12px 0 0 22px; padding-left: 6px; border-radius: 9px; background: #fff; box-shadow: inset 0 0 9px #aaa; color: #737373; }
.searchbox svg { width: 32px; height: 32px; margin-right: 4px; }
.top .help { margin: 22px 0 0 8px; }
.help { width: 32px; height: 32px; }
.who { margin: 37px 0 0 51px; line-height: 32px; }
.out { margin: 37px 0 0 40px; line-height: 32px; }
.crumbs { display: flex; align-items: center; height: 56px; padding-left: 37px; background: #f6faf2; border-bottom: 2px solid #d3d7cf; color: #4d545d; }
.crumbs i { margin: 0 32px 0 44px; border-left: 9px solid #bbb; border-top: 8px solid transparent; border-bottom: 8px solid transparent; }
.cols { display: flex; }

aside { width: 690px; padding: 24px 0 0 30px; flex: none; }
.tasks { list-style: none; margin-bottom: 37px; }
.tasks li { display: flex; align-items: center; gap: 12px; height: 64px; padding-left: 4px; color: #204a87; line-height: 40px; }
.tasks .seen { color: #5c3566; }
.tasks svg { width: 48px; height: 48px; margin-top: 3px; }
.pane { margin-bottom: 40px; border: 2px solid #eee; border-radius: 8px; }
.pane h3 { display: flex; justify-content: space-between; align-items: center; height: 73px; padding: 0 51px 0 30px; background: #eee; font-size: 28px; }
.pane h3 span, .pane h3 a { margin-bottom: 2px; }
.pane h3 a { color: #204a87; text-decoration: underline; }
.pane h3 svg { width: 26px; height: 10px; margin-top: 4px; }
.pane p { height: 51px; padding-left: 8px; line-height: 51px; }
.pane ol { list-style: none; padding-bottom: 0; }
.pane ol li { display: flex; height: 51px; line-height: 51px; }
.pane ol i { width: 68px; padding-left: 37px; }

main { width: 3014px; margin-left: 66px; }
h1 { display: flex; align-items: center; height: 219px; font-size: 56px; }
h1 svg { width: 96px; height: 96px; margin: 13px 15px 0 -6px; }
h2 { height: 46px; padding-bottom: 9px; border-bottom: 2px solid #ddd; font-size: 28px; line-height: 35px; }
.roles { margin: 14px 0 0 1px; border-collapse: collapse; table-layout: fixed; }
.roles tr { height: 48px; }
.roles tr:first-child { height: 53px; }
.roles th, .roles td { border: 2px solid #d3d7cf; font-weight: 400; text-align: center; vertical-align: middle; white-space: nowrap; line-height: 32px; }
.roles th { background: #eee; }
.roles td { padding-bottom: 5px; }
.roles td.e { border-top: 0; border-bottom: 0; padding: 2px 0 0 7px; }
.roles td.e:first-child { border-left: 0; }
.roles td.e:last-child { border-right: 0; }
.roles td.r { padding-left: 6px; }
.roles .e svg { width: 24px; height: 24px; }
.roles .u { text-align: left; padding-left: 2px; }
.roles .u svg { display: inline-block; width: 20px; height: 24px; margin: 0 12px 0 6px; vertical-align: -5px; }
.c-edge { width: 38px; }
.c-user { width: 224px; }
.c-edge2 { width: 32px; }
.global { width: 1014px; }
.global .c1 { width: 90px; }
.global .c2 { width: 120px; }
.item { width: 1045px; }
.item .c1 { width: 119px; }
.item .c2 { width: 122px; }
.c3 { width: 89px; }
.c4 { width: 161px; }
.c5 { width: 67px; }
.c6 { width: 193px; }
.node { width: 193px; }
.node .c-user { width: 155px; }
input[type="checkbox"] { display: block; appearance: none; width: 24px; height: 24px; margin: 0 auto; border: 2px solid #a6a6a6; border-top-color: #b4b4b4; border-radius: 5px; background: linear-gradient(#ededed, #dcdcdc 40%, #dedede); box-shadow: 0 2px 1px #e4e4e4; }
input:checked::before { content: ""; display: block; width: 18px; height: 18px; margin: 1px 0 0 1px; background: #404040; clip-path: polygon(5% 58%, 22% 44%, 38% 58%, 76% 2%, 96% 16%, 44% 94%, 32% 94%); }

.add { display: grid; grid-template-columns: 396px 2578px 32px; column-gap: 0; margin: 86px 0 32px; }
.add label { padding-left: 60px; line-height: 38px; }
.field { display: flex; align-items: center; justify-content: flex-end; height: 67px; padding-right: 51px; border: 2px solid #ccc; border-radius: 7px; box-shadow: inset 0 2px 3px #eee; }
.field svg { width: 32px; height: 28px; margin-top: 1px; }
.add .help { margin: 20px 0 0 8px; }
.add button { grid-column: 2; width: 131px; height: 64px; margin: 24px 0 0 5px; border: 2px solid #ccc; border-radius: 2px; background: #e0e0e0; color: #4d4d4d; font: bold 24px "Liberation Sans", sans-serif; }

.scroll { display: flex; flex-direction: column; align-items: center; width: 34px; background: #f0f0f0; }
.up { margin-top: 14px; border: 8px solid transparent; border-top: 0; border-bottom-color: #a3a3a3; }
.thumb { width: 30px; height: 1409px; margin-top: 12px; background: #c1c1c1; }
.down { margin: auto 0 13px; border: 8px solid transparent; border-bottom: 0; border-top-color: #505050; }
```
